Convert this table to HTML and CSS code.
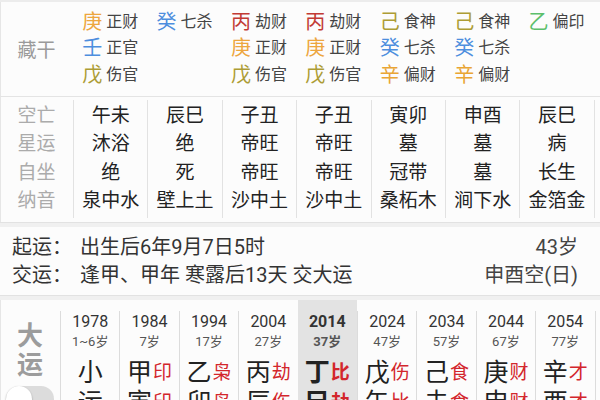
FILE: index.html
```html
<!DOCTYPE html>
<html lang="zh-CN">
<head>
<meta charset="utf-8">
<title>八字排盘</title>
<link rel="stylesheet" href="styles.css">
</head>
<body>
<div class="page">
  <section class="cg">
    <div class="lbl">藏干</div>
    <div class="col">
      <div class="ln"><span class="st geng">庚</span><span class="god">正财</span></div>
      <div class="ln"><span class="st ren">壬</span><span class="god">正官</span></div>
      <div class="ln"><span class="st wu">戊</span><span class="god">伤官</span></div>
    </div>
    <div class="col">
      <div class="ln"><span class="st gui">癸</span><span class="god">七杀</span></div>
    </div>
    <div class="col">
      <div class="ln"><span class="st bing">丙</span><span class="god">劫财</span></div>
      <div class="ln"><span class="st geng">庚</span><span class="god">正财</span></div>
      <div class="ln"><span class="st wu">戊</span><span class="god">伤官</span></div>
    </div>
    <div class="col">
      <div class="ln"><span class="st bing">丙</span><span class="god">劫财</span></div>
      <div class="ln"><span class="st geng">庚</span><span class="god">正财</span></div>
      <div class="ln"><span class="st wu">戊</span><span class="god">伤官</span></div>
    </div>
    <div class="col">
      <div class="ln"><span class="st ji">己</span><span class="god">食神</span></div>
      <div class="ln"><span class="st gui">癸</span><span class="god">七杀</span></div>
      <div class="ln"><span class="st xin">辛</span><span class="god">偏财</span></div>
    </div>
    <div class="col">
      <div class="ln"><span class="st ji">己</span><span class="god">食神</span></div>
      <div class="ln"><span class="st gui">癸</span><span class="god">七杀</span></div>
      <div class="ln"><span class="st xin">辛</span><span class="god">偏财</span></div>
    </div>
    <div class="col">
      <div class="ln"><span class="st yi">乙</span><span class="god">偏印</span></div>
    </div>
    <div class="col"></div>
  </section>
  <div class="hr"></div>
  <section class="mid">
    <div class="mlbl">空亡<br>星运<br>自坐<br>纳音</div>
    <div class="mc">午未<br>沐浴<br>绝<br>泉中水</div>
    <div class="mc">辰巳<br>绝<br>死<br>壁上土</div>
    <div class="mc">子丑<br>帝旺<br>帝旺<br>沙中土</div>
    <div class="mc">子丑<br>帝旺<br>帝旺<br>沙中土</div>
    <div class="mc">寅卯<br>墓<br>冠带<br>桑柘木</div>
    <div class="mc">申酉<br>墓<br>墓<br>涧下水</div>
    <div class="mc">辰巳<br>病<br>长生<br>金箔金</div>
    <div class="mc"></div>
  </section>
  <div class="band"></div>
  <section class="info">
    <div class="row"><span class="k">起运：</span><span class="v">出生后6年9月7日5时</span><span class="r">43岁</span></div>
    <div class="row"><span class="k">交运：</span><span class="v">逢甲、甲年 寒露后13天 交大运</span><span class="r">申酉空(日)</span></div>
  </section>
  <div class="band"></div>
  <section class="dy">
    <div class="dylbl">
      <div class="dyt">大<br>运</div>
      <div class="toggle"><span class="knob"></span></div>
    </div>
    <div class="dc"><div class="yr">1978</div><div class="age">1~6岁</div><div class="gz">小</div><div class="gz">运</div></div>
    <div class="dc"><div class="yr">1984</div><div class="age">7岁</div><div class="gz">甲<span class="g">印</span></div><div class="gz">寅<span class="g">印</span></div></div>
    <div class="dc"><div class="yr">1994</div><div class="age">17岁</div><div class="gz">乙<span class="g">枭</span></div><div class="gz">卯<span class="g">枭</span></div></div>
    <div class="dc"><div class="yr">2004</div><div class="age">27岁</div><div class="gz">丙<span class="g">劫</span></div><div class="gz">辰<span class="g">伤</span></div></div>
    <div class="dc cur"><div class="yr">2014</div><div class="age">37岁</div><div class="gz">丁<span class="g">比</span></div><div class="gz">巳<span class="g">劫</span></div></div>
    <div class="dc"><div class="yr">2024</div><div class="age">47岁</div><div class="gz">戊<span class="g">伤</span></div><div class="gz">午<span class="g">比</span></div></div>
    <div class="dc"><div class="yr">2034</div><div class="age">57岁</div><div class="gz">己<span class="g">食</span></div><div class="gz">未<span class="g">食</span></div></div>
    <div class="dc"><div class="yr">2044</div><div class="age">67岁</div><div class="gz">庚<span class="g">财</span></div><div class="gz">申<span class="g">财</span></div></div>
    <div class="dc"><div class="yr">2054</div><div class="age">77岁</div><div class="gz">辛<span class="g">才</span></div><div class="gz">酉<span class="g">才</span></div></div>
    <div class="dc"><div class="yr"></div></div>
  </section>
</div>
</body>
</html>
```

FILE: styles.css
```css
* { box-sizing: border-box; }
body {
  margin: 0;
  background: #fcfcfc;
  font-family: Roboto, "Noto Sans CJK SC", sans-serif;
  color: #222;
}
.page {
  width: 600px;
  height: 400px;
  overflow: hidden;
  background: #fcfcfc;
  box-shadow: inset 1px 0 0 #e6e6e6;
}

/* 藏干 */
.cg {
  display: grid;
  grid-template-columns: 73px repeat(8, 74.4px);
  border-top: 2px solid #ececec;
  padding: 6.5px 0 7.5px;
}
.cg .lbl {
  display: flex;
  align-items: center;
  justify-content: center;
  font-size: 19px;
  color: #9a9a9a;
}
.col {
  display: flex;
  flex-direction: column;
  align-items: center;
}
.ln {
  height: 26.5px;
  display: flex;
  align-items: center;
  gap: 4px;
}
.st { font-size: 20px; line-height: 1; }
.god { font-size: 16px; color: #444; line-height: 1; }
.geng { color: #eda63f; }
.ren { color: #4d8ede; }
.wu { color: #ad9c35; }
.gui { color: #4d8ede; }
.bing { color: #c23a34; }
.ji { color: #ad9c35; }
.xin { color: #e9a534; }
.yi { color: #5cbf6b; }

.hr { height: 1px; background: #e4e4e4; }

/* 空亡 etc */
.mid {
  display: grid;
  grid-template-columns: 73px repeat(8, 74.4px);
  padding: 3px 0 4px;
}
.mlbl, .mc {
  font-size: 19px;
  line-height: 28.3px;
  text-align: center;
  padding: 2.5px 0;
}
.mlbl { color: #ababab; }
.mc { border-left: 1px solid #e2e2e2; color: #222; }

.band {
  height: 5px;
  background: #f0f0f0;
  border-top: 1px solid #e2e2e2;
}

/* 起运 */
.info {
  padding: 6px 0;
  font-size: 20px;
  color: #333;
  background: #fcfcfc;
}
.row {
  display: flex;
  line-height: 28px;
  white-space: nowrap;
}
.k { width: 80px; padding-left: 12px; flex: none; }
.v { flex: 1; }
.r { padding-right: 22px; color: #444; }

/* 大运 */
.dy {
  display: grid;
  grid-template-columns: 60px repeat(10, 59.4px);
  height: 110px;
}
.dylbl {
  padding-top: 22.5px;
  display: flex;
  flex-direction: column;
  align-items: center;
}
.dyt {
  font-size: 26px;
  font-weight: bold;
  color: #9c9c9c;
  line-height: 29px;
  text-align: center;
}
.toggle {
  margin-top: 6px;
  width: 48px;
  height: 26px;
  border-radius: 13px;
  background: #dcdcdc;
  position: relative;
}
.knob {
  position: absolute;
  left: 0;
  top: 0;
  width: 26px;
  height: 26px;
  border-radius: 50%;
  background: #fff;
  box-shadow: 0 1px 2px rgba(0,0,0,0.35);
}
.dc {
  margin-top: 11px;
  border-left: 1px solid #dcdcdc;
  text-align: center;
}
.dc.cur {
  margin-top: 0;
  padding-top: 11px;
  border-left: none;
  background: #e3e3e3;
}
.yr { font-size: 16px; line-height: 22px; color: #333; }
.age { font-size: 13px; line-height: 18px; color: #555; }
.gz {
  display: flex;
  justify-content: center;
  align-items: center;
  font-size: 25px;
  line-height: 30px;
  color: #222;
}
.age + .gz { margin-top: 7px; }
.g { font-size: 19px; color: #d3262c; margin-left: 1px; }
.cur .yr, .cur .age, .cur .gz { font-weight: bold; }
```
